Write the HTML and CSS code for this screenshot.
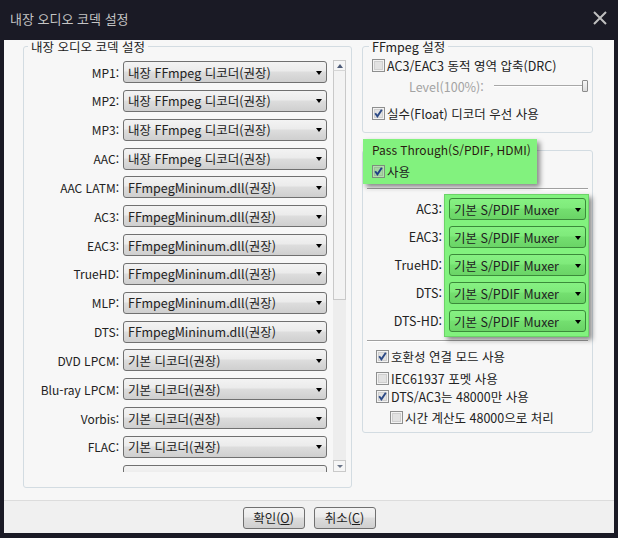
FILE: index.html
```html
<!DOCTYPE html>
<html lang="ko">
<head>
<meta charset="utf-8">
<title>내장 오디오 코덱 설정</title>
<link rel="stylesheet" href="styles.css">
</head>
<body>
<div class="window">
  <div class="titlebar">
    <span class="title">내장 오디오 코덱 설정</span>
    <svg class="close" width="14" height="14" viewBox="0 0 14 14"><path d="M1 1L13 13M13 1L1 13" stroke="#bfbfbf" stroke-width="2" fill="none"/></svg>
  </div>
  <div class="client">
    <div class="content">
      <div class="group codecs">
        <div class="group-title">내장 오디오 코덱 설정</div>
        <div class="codec-area">
          <div class="viewport">
            <div class="row"><span class="lbl">MP1:</span><div class="combo">내장 FFmpeg 디코더(권장)</div></div>
            <div class="row"><span class="lbl">MP2:</span><div class="combo">내장 FFmpeg 디코더(권장)</div></div>
            <div class="row"><span class="lbl">MP3:</span><div class="combo">내장 FFmpeg 디코더(권장)</div></div>
            <div class="row"><span class="lbl">AAC:</span><div class="combo">내장 FFmpeg 디코더(권장)</div></div>
            <div class="row"><span class="lbl">AAC LATM:</span><div class="combo">FFmpegMininum.dll(권장)</div></div>
            <div class="row"><span class="lbl">AC3:</span><div class="combo">FFmpegMininum.dll(권장)</div></div>
            <div class="row"><span class="lbl">EAC3:</span><div class="combo">FFmpegMininum.dll(권장)</div></div>
            <div class="row"><span class="lbl">TrueHD:</span><div class="combo">FFmpegMininum.dll(권장)</div></div>
            <div class="row"><span class="lbl">MLP:</span><div class="combo">FFmpegMininum.dll(권장)</div></div>
            <div class="row"><span class="lbl">DTS:</span><div class="combo">FFmpegMininum.dll(권장)</div></div>
            <div class="row"><span class="lbl">DVD LPCM:</span><div class="combo">기본 디코더(권장)</div></div>
            <div class="row"><span class="lbl">Blu-ray LPCM:</span><div class="combo">기본 디코더(권장)</div></div>
            <div class="row"><span class="lbl">Vorbis:</span><div class="combo">기본 디코더(권장)</div></div>
            <div class="row"><span class="lbl">FLAC:</span><div class="combo">기본 디코더(권장)</div></div>
            <div class="row"><span class="lbl"></span><div class="combo"></div></div>
          </div>
          <div class="scrollbar">
            <div class="sb-btn up"></div>
            <div class="sb-thumb"></div>
            <div class="sb-track"></div>
            <div class="sb-btn down"></div>
          </div>
        </div>
      </div>

      <div class="right">
        <div class="group ffmpeg">
          <div class="group-title">FFmpeg 설정</div>
          <div class="chk-row r1">
            <svg class="cb" width="13" height="13" viewBox="0 0 13 13"><rect x="0.5" y="0.5" width="12" height="12" fill="#f3f3f3" stroke="#8e8f8f"/><rect x="2.5" y="2.5" width="8" height="8" fill="#e2e2e2" stroke="#cfcfcf"/></svg>
            <span>AC3/EAC3 동적 영역 압축(DRC)</span>
          </div>
          <div class="level-row">
            <span class="disabled">Level(100%):</span>
            <div class="slider"><div class="track"></div><div class="thumb"></div></div>
          </div>
          <div class="chk-row r3">
            <svg class="cb" width="13" height="13" viewBox="0 0 13 13"><rect x="0.5" y="0.5" width="12" height="12" fill="#f3f3f3" stroke="#8e8f8f"/><rect x="2.5" y="2.5" width="8" height="8" fill="#e2e2e2" stroke="#cfcfcf"/><path d="M3.2 6.3L5.4 9.3L9.8 2.8" stroke="#2c4a86" stroke-width="1.9" fill="none"/></svg>
            <span>실수(Float) 디코더 우선 사용</span>
          </div>
        </div>

        <div class="group pt">
          <div class="pt-head">
            <div class="pt-title">Pass Through(S/PDIF, HDMI)</div>
            <div class="chk-row pt-use">
              <svg class="cb" width="13" height="13" viewBox="0 0 13 13"><rect x="0.5" y="0.5" width="12" height="12" fill="#b4dcb0" stroke="#7d8f7d"/><rect x="2.5" y="2.5" width="8" height="8" fill="#a6d4a2" stroke="#98c494"/><path d="M3.2 6.3L5.4 9.3L9.8 2.8" stroke="#1f3f86" stroke-width="1.9" fill="none"/></svg>
              <span>사용</span>
            </div>
          </div>
          <div class="sep"></div>
          <div class="pt-grid">
            <div class="pt-labels">
              <span>AC3:</span><span>EAC3:</span><span>TrueHD:</span><span>DTS:</span><span>DTS-HD:</span>
            </div>
            <div class="pt-box">
              <div class="combo green">기본 S/PDIF Muxer</div>
              <div class="combo green">기본 S/PDIF Muxer</div>
              <div class="combo green">기본 S/PDIF Muxer</div>
              <div class="combo green">기본 S/PDIF Muxer</div>
              <div class="combo green">기본 S/PDIF Muxer</div>
            </div>
          </div>
          <div class="sep sep2"></div>
          <div class="chk-row b1">
            <svg class="cb" width="13" height="13" viewBox="0 0 13 13"><rect x="0.5" y="0.5" width="12" height="12" fill="#f3f3f3" stroke="#8e8f8f"/><rect x="2.5" y="2.5" width="8" height="8" fill="#e2e2e2" stroke="#cfcfcf"/><path d="M3.2 6.3L5.4 9.3L9.8 2.8" stroke="#2c4a86" stroke-width="1.9" fill="none"/></svg>
            <span>호환성 연결 모드 사용</span>
          </div>
          <div class="chk-row b2">
            <svg class="cb" width="13" height="13" viewBox="0 0 13 13"><rect x="0.5" y="0.5" width="12" height="12" fill="#f3f3f3" stroke="#8e8f8f"/><rect x="2.5" y="2.5" width="8" height="8" fill="#e2e2e2" stroke="#cfcfcf"/></svg>
            <span>IEC61937 포멧 사용</span>
          </div>
          <div class="chk-row b3">
            <svg class="cb" width="13" height="13" viewBox="0 0 13 13"><rect x="0.5" y="0.5" width="12" height="12" fill="#f3f3f3" stroke="#8e8f8f"/><rect x="2.5" y="2.5" width="8" height="8" fill="#e2e2e2" stroke="#cfcfcf"/><path d="M3.2 6.3L5.4 9.3L9.8 2.8" stroke="#2c4a86" stroke-width="1.9" fill="none"/></svg>
            <span>DTS/AC3는 48000만 사용</span>
          </div>
          <div class="chk-row b4">
            <svg class="cb" width="13" height="13" viewBox="0 0 13 13"><rect x="0.5" y="0.5" width="12" height="12" fill="#f3f3f3" stroke="#8e8f8f"/><rect x="2.5" y="2.5" width="8" height="8" fill="#e2e2e2" stroke="#cfcfcf"/></svg>
            <span>시간 계산도 48000으로 처리</span>
          </div>
        </div>
      </div>
    </div>
    <div class="buttonbar">
      <button class="btn">확인(<u>O</u>)</button>
      <button class="btn">취소(<u>C</u>)</button>
    </div>
  </div>
</div>
</body>
</html>
```

FILE: styles.css
```css
* { box-sizing: border-box; }

html, body {
  margin: 0;
  padding: 0;
  background: #1a1a25;
}

body {
  font-family: "Noto Sans CJK KR", "Noto Sans", sans-serif;
  font-size: 12px;
  color: #222222;
}

.window {
  width: 618px;
  height: 538px;
  display: flex;
  flex-direction: column;
  padding: 0 4px 5px 4px;
  background: #1a1a25;
}

.titlebar {
  height: 40px;
  flex-shrink: 0;
  display: flex;
  align-items: center;
  justify-content: space-between;
  padding: 0 7px 4px 6px;
  color: #c4c4c4;
  font-size: 13px;
}

.close { display: block; }

.client {
  flex: 1;
  display: flex;
  flex-direction: column;
  background: #f7f7f7;
  min-height: 0;
}

.content {
  flex: 1;
  display: flex;
  align-items: flex-start;
  padding-left: 19px;
  padding-top: 6px;
  min-height: 0;
}

.group {
  border: 1px solid #d3dce2;
  border-radius: 3px;
}

.group-title {
  width: fit-content;
  height: 10px;
  line-height: 10px;
  margin: -5px 0 0 4px;
  padding: 0 3px;
  background: #f7f7f7;
  font-size: 12.5px;
  white-space: nowrap;
}

/* left group */
.codecs {
  width: 329px;
  height: 442px;
  padding: 0 4px 0 0;
}

.codec-area {
  display: flex;
  align-items: flex-start;
  margin-top: 6px;
}

.viewport {
  width: 305px;
  height: 414px;
  overflow: hidden;
  padding-top: 3px;
  display: flex;
  flex-direction: column;
  gap: 6.85px;
}

.row {
  flex-shrink: 0;
  display: grid;
  grid-template-columns: 95px 204px;
  column-gap: 4px;
  align-items: center;
}

.lbl {
  text-align: right;
  white-space: nowrap;
}

.combo {
  height: 22px;
  border: 1px solid #707070;
  border-radius: 3px;
  background: linear-gradient(#f3f3f3 0%, #ebebeb 45%, #dddddd 50%, #cfcfcf 100%);
  display: flex;
  align-items: center;
  justify-content: space-between;
  padding: 0 4px 0 4px;
  white-space: nowrap;
  font-size: 12.5px;
}

.combo::after {
  content: "";
  width: 0;
  height: 0;
  margin-left: auto;
  border-left: 3.5px solid transparent;
  border-right: 3.5px solid transparent;
  border-top: 4px solid #000;
  margin-top: 1px;
}

.scrollbar {
  width: 13px;
  height: 412px;
  margin-top: 2px;
  margin-left: 4px;
  display: flex;
  flex-direction: column;
  background: #eeeeee;
}

.sb-btn {
  height: 12px;
  border: 1px solid #c9c9c9;
  background: #f6f6f6;
  display: flex;
  align-items: center;
  justify-content: center;
}

.sb-btn.up { height: 11px; border-bottom-color: #d6d6d6; }

.sb-btn.up::after {
  content: "";
  border-left: 3.5px solid transparent;
  border-right: 3.5px solid transparent;
  border-bottom: 4px solid #4d5b78;
}

.sb-btn.down::after {
  content: "";
  border-left: 3px solid transparent;
  border-right: 3px solid transparent;
  border-top: 3px solid #6a7488;
}

.sb-thumb {
  height: 229px;
  border: 1px solid #c9c9c9;
  border-top: none;
  background: #f3f3f3;
}

.sb-track {
  flex: 1;
  background: #ededed;
}

/* right column */
.right {
  width: 231px;
  margin-left: 10px;
  display: flex;
  flex-direction: column;
}

.ffmpeg {
  height: 87px;
  padding: 0 0 0 9px;
}

.ffmpeg .group-title {
  margin-left: -3px;
}

.chk-row {
  height: 18px;
  display: flex;
  align-items: center;
  gap: 2px;
  white-space: nowrap;
  font-size: 12.5px;
}

.cb { display: block; flex-shrink: 0; }

.ffmpeg .r1 { margin-top: 4px; }
.ffmpeg .r3 { margin-top: 9px; }

.level-row {
  height: 18px;
  margin-top: 3px;
  padding-left: 37px;
  display: flex;
  align-items: center;
  font-size: 12.5px;
}

.disabled { color: #a3a3a3; }

.slider {
  width: 94px;
  margin-left: 10px;
  height: 12px;
  display: flex;
  align-items: center;
}

.track {
  flex: 1;
  height: 2px;
  border-top: 1px solid #a8a8a8;
  border-bottom: 1px solid #ffffff;
  background: #d8d8d8;
}

.thumb {
  width: 6px;
  height: 12px;
  border: 1px solid #8c8c8c;
  border-radius: 1px;
  background: linear-gradient(#f6f6f6, #dcdcdc);
  margin-left: -4px;
}

/* pass through */
.pt {
  margin-top: 17px;
  height: 283px;
}

.pt-head {
  width: 174px;
  height: 45px;
  margin-top: -12px;
  background: #82f27e;
  box-shadow: 3px 3px 5px rgba(0, 0, 0, 0.45);
  padding: 3px 0 0 9px;
  position: relative;
}

.pt-title {
  line-height: 16px;
  font-size: 12px;
  color: #2a1a10;
  white-space: nowrap;
}

.pt-use { margin-top: 4px; }

.sep {
  height: 2px;
  margin: 4px 4px 0 4px;
  border-top: 1px solid #a0a0a0;
  border-bottom: 1px solid #ffffff;
}

.pt-grid {
  display: flex;
  margin-top: 4px;
}

.pt-labels {
  width: 79px;
  margin-right: 2px;
  padding-top: 4px;
  display: flex;
  flex-direction: column;
  gap: 6px;
  text-align: right;
  font-size: 12.5px;
}

.pt-labels span {
  height: 22px;
  line-height: 22px;
}

.pt-box {
  width: 145px;
  height: 143px;
  background: #82f27e;
  border: 1px solid #6cd468;
  box-shadow: 3px 3px 5px rgba(0, 0, 0, 0.45);
  padding: 3px 2px 0 4px;
  display: flex;
  flex-direction: column;
  gap: 6px;
}

.combo.green {
  border-color: #3b8a3a;
  background: linear-gradient(#86f182 0%, #7fea7b 45%, #74df70 50%, #6ad466 100%);
  padding-left: 4px;
}

.sep2 { margin-top: 3px; }

.pt .b1 { margin-top: 5px; padding-left: 13px; }
.pt .b2 { margin-top: 4px; padding-left: 13px; }
.pt .b3 { margin-top: 0; padding-left: 13px; }
.pt .b4 { margin-top: 3px; padding-left: 27px; }

/* button bar */
.buttonbar {
  height: 33px;
  flex-shrink: 0;
  border-top: 1px solid #dcdcdc;
  background: #f0f0f0;
  display: flex;
  justify-content: center;
  gap: 9px;
  padding-top: 6px;
}

.btn {
  width: 62px;
  height: 22px;
  border: 1px solid #707070;
  border-radius: 3px;
  background: linear-gradient(#f3f3f3 0%, #ebebeb 45%, #dddddd 50%, #cfcfcf 100%);
  font-family: "Noto Sans CJK KR", "Noto Sans", sans-serif;
  font-size: 12.5px;
  color: #1e1e1e;
  padding: 0;
  line-height: 18px;
}

.btn u { text-decoration: underline; text-underline-offset: 1px; }
```
